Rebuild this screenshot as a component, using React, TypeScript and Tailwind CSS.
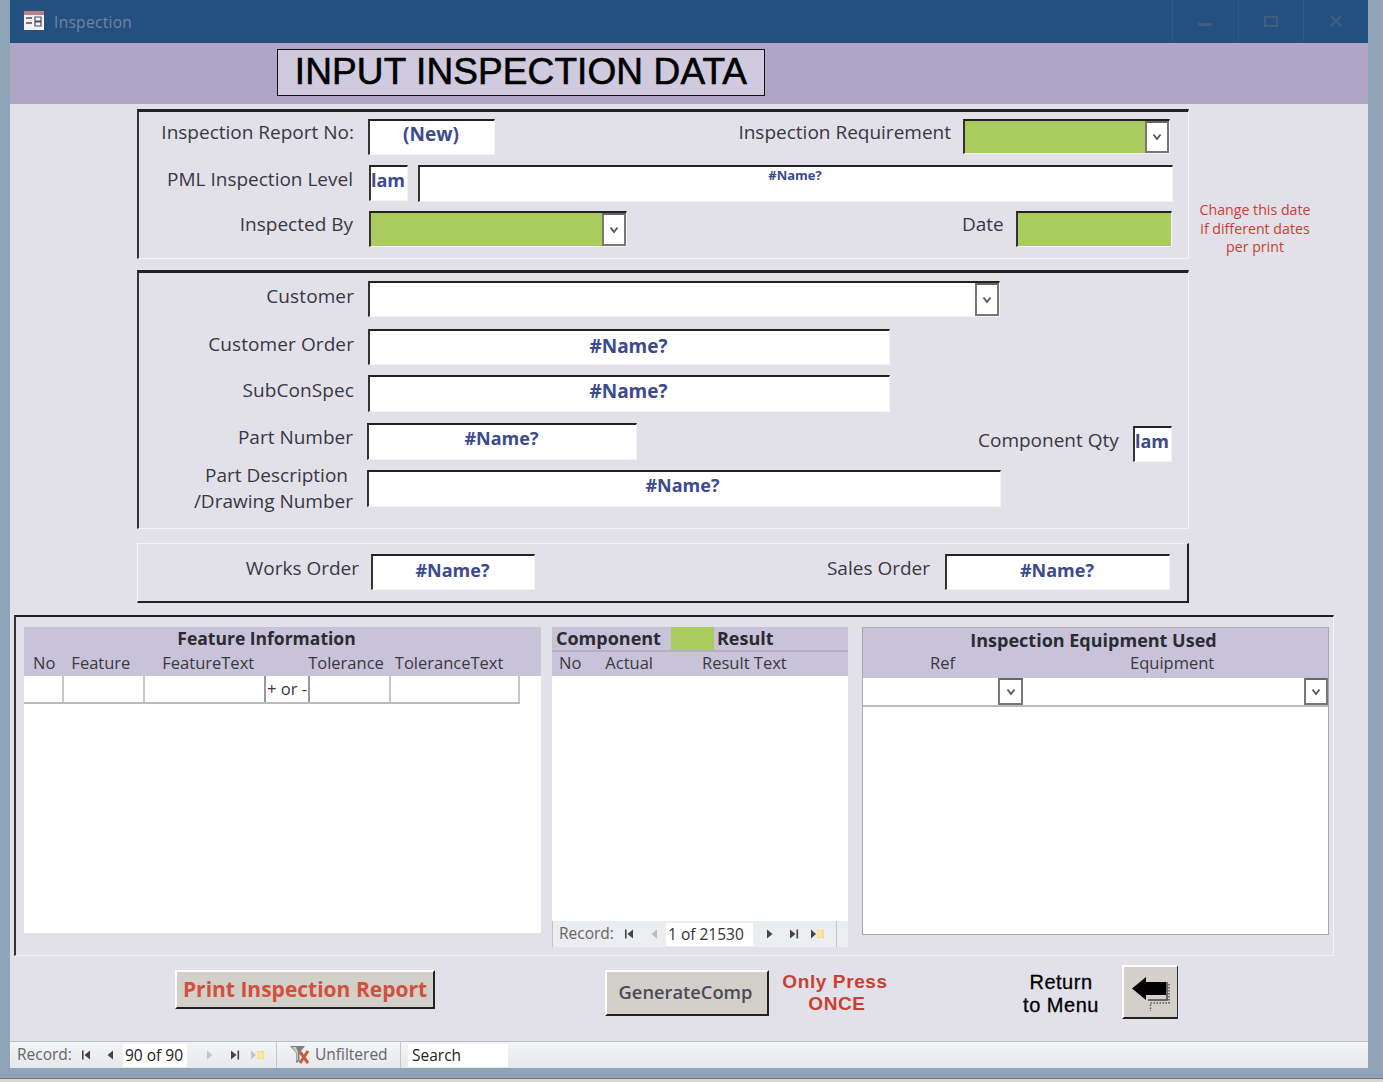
import type { ReactNode } from "react";
import { twMerge } from "tailwind-merge";

const font = "font-['Open_Sans','Noto_Sans',sans-serif]";

function Label({ className = "", children }: { className?: string; children: ReactNode }) {
  return <div className={twMerge("shrink-0 text-[19px] leading-[24px] text-[#38383f]", className)}>{children}</div>;
}

function Field({ className = "", children }: { className?: string; children?: ReactNode }) {
  return (
    <div
      className={twMerge(
        "shrink-0 flex justify-center border-t-2 border-l-2 border-t-[#222] border-l-[#333] border-r border-b border-r-[#f4f4f8] border-b-[#f4f4f8] bg-white text-[19px] font-bold leading-[24px] text-[#3c4a8e]",
        className
      )}
    >
      {children}
    </div>
  );
}

function Chevron() {
  return (
    <svg width="10" height="8" viewBox="0 0 10 8" fill="none">
      <path d="M1.5 1.5 5 6l3.5-4.5" stroke="#555" strokeWidth="1.8" />
    </svg>
  );
}

function DropButton({ className = "" }: { className?: string }) {
  return (
    <div className={`shrink-0 flex items-center justify-center border-2 border-[#777] border-t-[#666] bg-white ${className}`}>
      <Chevron />
    </div>
  );
}

function Combo({ className = "", green = false }: { className?: string; green?: boolean }) {
  return (
    <div
      className={`shrink-0 flex justify-end border-t-2 border-l-2 border-t-[#222] border-l-[#333] border-r border-b border-r-[#f4f4f8] border-b-[#f4f4f8] ${green ? "bg-[#aacc5f]" : "bg-white"} ${className}`}
    >
      <DropButton className="w-[24px]" />
    </div>
  );
}

function NavIcon({ kind, color = "#444" }: { kind: "first" | "prev" | "next" | "last" | "new"; color?: string }) {
  return (
    <svg width="14" height="12" viewBox="0 0 14 12" className="shrink-0 block">
      {kind === "first" && <path d="M3 1.500h1.600v9H3zM11 1.500v9L5.500 6z" fill={color} />}
      {kind === "prev" && <path d="M10 1.500v9L4.500 6z" fill={color} />}
      {kind === "next" && <path d="M4 1.500v9L9.500 6z" fill={color} />}
      {kind === "last" && <path d="M3 1.500v9L8.500 6zM9.500 1.500h1.600v9H9.500z" fill={color} />}
      {kind === "new" && (
        <>
          <path d="M0 1.500v9L5 6z" fill={color} />
          <path d="M6 2h7v8H6z" fill="#eed676" />
          <path d="M6 4h7M6 6h7M6 8h7M8 2v8M10 2v8" stroke="#fff6c8" strokeWidth="0.7" />
        </>
      )}
    </svg>
  );
}

function BackArrow() {
  return (
    <svg width="38" height="38" viewBox="0 0 38 38" className="block">
      <path d="M37 11v19H18.500v8" fill="none" stroke="#555" strokeWidth="1.500" strokeDasharray="1.500 1.500" />
      <path d="M16 27h19V9" fill="none" stroke="#444" strokeWidth="1.500" />
      <path d="M0 15.500 14 4v5h20v13H14v5z" fill="#000" />
    </svg>
  );
}

function TableIcon() {
  return (
    <svg width="22" height="22" viewBox="0 0 22 22">
      <rect x="1" y="1" width="20" height="19" fill="#f2f2f5" />
      <rect x="1" y="1" width="20" height="4" fill="#b9808a" />
      <path d="M3 8h6M3 13h6" stroke="#47505f" strokeWidth="1.600" />
      <path d="M12 7h6v4h-6zM12 12h6v4h-6z" fill="none" stroke="#47505f" strokeWidth="1.200" />
    </svg>
  );
}

function FilterIcon() {
  return (
    <svg width="22" height="20" viewBox="0 0 22 20" className="block">
      <path d="M1 1h15l-5.500 7v8l-3.500 2V8z" fill="#7f7f7f" />
      <path d="M3 2h4l2 5v8l-1.500 1V8z" fill="#c9c9c9" />
      <path d="m11 7 8 11M19 6l-8 12" stroke="#d0583c" strokeWidth="3" />
    </svg>
  );
}

export default function App() {
  return (
    <div className={`${font} flex h-[1082px] w-[1383px] flex-col overflow-hidden bg-[#8fa5b7]`}>
      <div className="ml-[10px] flex h-[1068px] w-[1358px] flex-col">
        {/* Title bar */}
        <div className="flex h-[43px] shrink-0 items-center bg-[#24507f] pb-[1px]">
          <div className="ml-[13px]">
            <TableIcon />
          </div>
          <div className="ml-[9px] mt-[3px] text-[15.500px] tracking-[0.3px] text-[#6f86a2]">Inspection</div>
          <div className="ml-auto flex h-full">
            <div className="flex w-[66px] items-center justify-center border-l border-[#2f5a88] pr-[2px]">
              <div className="mt-[7px] h-[3px] w-[14px] bg-[#3e5e7e]" />
            </div>
            <div className="flex w-[65px] items-center justify-center border-l border-[#2f5a88]">
              <div className="h-[11px] w-[14px] border-2 border-[#3e5e7e]" />
            </div>
            <div className="flex w-[65px] items-center justify-center border-l border-[#2f5a88]">
              <svg width="12" height="12" viewBox="0 0 12 12">
                <path d="m1 1 10 10M11 1 1 11" stroke="#3e5e7e" strokeWidth="2.200" />
              </svg>
            </div>
          </div>
        </div>

        {/* Header band */}
        <div className="flex h-[61px] shrink-0 items-start bg-[#afa6c5] pl-[267px] pt-[6px]">
          <div className="flex h-[47px] w-[488px] items-center justify-center whitespace-nowrap border border-[#111] bg-[#cfcadd] pb-[2px] font-['Liberation_Sans',sans-serif] text-[37px] leading-none tracking-[0.1px] text-black [-webkit-text-stroke:0.6px_black]">
            INPUT INSPECTION DATA
          </div>
        </div>

        {/* Form body */}
        <div className="flex h-[937px] shrink-0 flex-col bg-[#e2e1ea]">
          <div className="ml-[127px] mt-[5px] flex items-start">
            <section className="flex h-[150px] w-[1052px] shrink-0 flex-col border-t-[3px] border-l-2 border-t-[#222] border-l-[#333] border-r border-b border-r-[#f4f4f8] border-b-[#f4f4f8] pt-[7px]">
              <div className="flex h-[46px] items-start">
                <Label className="mt-[1px] w-[215px] text-right">Inspection Report No:</Label>
                <Field className="ml-[14px] h-[36px] w-[127px] pr-[2px] pt-[1px]">(New)</Field>
                <Label className="ml-[243px] mt-[1px] w-[213px] text-right">Inspection Requirement</Label>
                <Combo green className="ml-[12px] h-[35px] w-[207px]" />
              </div>
              <div className="flex h-[46px] items-start">
                <Label className="mt-[2px] w-[214px] text-right">PML Inspection Level</Label>
                <Field className="ml-[16px] h-[36px] w-[39px] justify-start text-[18px]">lam</Field>
                <Field className="ml-[10px] h-[37px] w-[755px] pr-[2px] text-[13px] leading-[16px]">#Name?</Field>
              </div>
              <div className="flex items-start">
                <Label className="mt-[1px] w-[214px] text-right">Inspected By</Label>
                <Combo green className="ml-[16px] h-[36px] w-[258px]" />
                <Label className="ml-[335px] mt-[1px] w-[42px] whitespace-nowrap">Date</Label>
                <Field className="ml-[12px] h-[36px] w-[156px] bg-[#aacc5f]" />
              </div>
            </section>
            <div className="ml-[8px] mt-[92px] w-[116px] whitespace-nowrap text-center text-[14.200px] leading-[18.500px] text-[#c8402f]">
              Change this date
              <br />
              if different dates
              <br />
              per print
            </div>
          </div>

          <section className="ml-[127px] mt-[11px] flex h-[259px] w-[1052px] shrink-0 flex-col border-t-[3px] border-l-2 border-t-[#222] border-l-[#333] border-r border-b border-r-[#f4f4f8] border-b-[#f4f4f8] pt-[8px]">
            <div className="flex h-[48px] items-start">
              <Label className="mt-[3px] w-[215px] text-right tracking-[0.1px]">Customer</Label>
              <Combo className="ml-[14px] h-[36px] w-[632px]" />
            </div>
            <div className="flex h-[46px] items-start">
              <Label className="mt-[3px] w-[215px] text-right tracking-[0.1px]">Customer Order</Label>
              <Field className="ml-[14px] h-[36px] w-[522px] pr-[2px] pt-[3px]">#Name?</Field>
            </div>
            <div className="flex h-[48px] items-start">
              <Label className="mt-[3px] w-[215px] text-right tracking-[0.1px]">SubConSpec</Label>
              <Field className="ml-[14px] h-[37px] w-[522px] pr-[2px] pt-[2px]">#Name?</Field>
            </div>
            <div className="flex h-[47px] items-start">
              <Label className="mt-[2px] w-[214px] text-right">Part Number</Label>
              <Field className="ml-[14px] h-[37px] w-[270px] pr-[2px] text-[18px]">#Name?</Field>
              <Label className="ml-[341px] mt-[5px] w-[139px] whitespace-nowrap text-right">Component Qty</Label>
              <Field className="ml-[16px] mt-[3px] h-[36px] w-[39px] justify-start text-[18px]">lam</Field>
            </div>
            <div className="flex items-start">
              <Label className="mt-[-8px] w-[214px] text-right leading-[26px]">
                <div className="pr-[5px]">Part Description</div>
                <div>/Drawing Number</div>
              </Label>
              <Field className="ml-[14px] h-[37px] w-[634px] pr-[4px] text-[18px]">#Name?</Field>
            </div>
          </section>

          <section className="ml-[127px] mt-[14px] flex h-[60px] w-[1052px] shrink-0 items-start border-t border-l border-b-2 border-r-2 border-t-[#f4f4f8] border-l-[#f4f4f8] border-b-[#222] border-r-[#222] pt-[10px]">
            <Label className="mt-[2px] w-[221px] text-right">Works Order</Label>
            <Field className="ml-[12px] h-[36px] w-[164px] pr-[2px] pt-[1px] text-[18px]">#Name?</Field>
            <Label className="ml-[269px] mt-[2px] w-[126px] text-right">Sales Order</Label>
            <Field className="ml-[15px] h-[36px] w-[225px] pr-[2px] pt-[1px] text-[18px]">#Name?</Field>
          </section>

          {/* Subforms */}
          <section className="ml-[4px] mt-[12px] flex h-[341px] w-[1320px] shrink-0 items-start border-t-2 border-l-2 border-t-[#222] border-l-[#333] border-r border-b border-r-[#f4f4f8] border-b-[#f4f4f8] pl-[8px] pt-[10px]">
            <div className="flex h-[306px] w-[517px] shrink-0 flex-col bg-white">
              <div className="h-[49px] shrink-0 bg-[#c9c3d9]">
                <div className="pr-[32px] text-center text-[17.500px] font-bold leading-[22px] text-[#2b2b33]">
                  Feature Information
                </div>
                <div className="flex whitespace-nowrap pt-[3px] text-[16.500px] leading-[22px] text-[#38383f]">
                  <span className="ml-[9px]">No</span>
                  <span className="ml-[16px]">Feature</span>
                  <span className="ml-[32px]">FeatureText</span>
                  <span className="ml-[54px]">Tolerance</span>
                  <span className="ml-[11px]">ToleranceText</span>
                </div>
              </div>
              <div className="flex h-[28px] w-[496px] shrink-0 border-b-2 border-[#bbb] text-[16.500px] leading-[26px] text-[#38383f]">
                <div className="w-[40px] border-r-2 border-[#c8c8c8]" />
                <div className="w-[81px] border-r-2 border-[#c8c8c8]" />
                <div className="w-[121px] border-r-2 border-[#999]" />
                <div className="w-[44px] whitespace-nowrap border-r-2 border-[#999] pl-[1px]">+ or -</div>
                <div className="w-[81px] border-r-2 border-[#c8c8c8]" />
                <div className="flex-1 border-r-2 border-[#c8c8c8]" />
              </div>
            </div>

            <div className="ml-[11px] flex h-[320px] w-[296px] shrink-0 flex-col">
              <div className="h-[49px] shrink-0 bg-[#c9c3d9]">
                <div className="flex h-[25px] items-start border-b-2 border-[#b5b0c4] text-[18px] font-bold leading-[22px] text-[#2b2b33]">
                  <span className="ml-[4px]">Component</span>
                  <div className="ml-[10px] h-[23px] w-[43px] bg-[#aacc5f]" />
                  <span className="ml-[3px]">Result</span>
                </div>
                <div className="flex whitespace-nowrap pt-[1px] text-[16.500px] leading-[20px] text-[#38383f]">
                  <span className="ml-[7px]">No</span>
                  <span className="ml-[24px]">Actual</span>
                  <span className="ml-[49px]">Result Text</span>
                </div>
              </div>
              <div className="h-[245px] shrink-0 bg-white" />
              <div className="flex h-[26px] shrink-0 items-center border-l border-[#c4c4c4] bg-[#ecedf1] pl-[6px] text-[15.500px] text-[#666]">
                <span className="w-[56px]">Record:</span>
                <span className="ml-[7px]"><NavIcon kind="first" /></span>
                <span className="ml-[11px]"><NavIcon kind="prev" color="#bbb" /></span>
                <div className="ml-[5px] h-[23px] w-[87px] bg-white pl-[2px] leading-[23px] text-[#333]">1 of 21530</div>
                <span className="ml-[10px]"><NavIcon kind="next" /></span>
                <span className="ml-[10px]"><NavIcon kind="last" /></span>
                <span className="ml-[10px]"><NavIcon kind="new" /></span>
                <div className="ml-[11px] h-full border-l border-[#c4c4c4]" />
              </div>
            </div>

            <div className="ml-[14px] flex h-[308px] w-[467px] shrink-0 flex-col border border-[#aaa] bg-white">
              <div className="h-[50px] shrink-0 bg-[#c9c3d9]">
                <div className="pr-[4px] text-center text-[18px] font-bold leading-[24px] text-[#2b2b33]">
                  Inspection Equipment Used
                </div>
                <div className="flex text-[16.500px] leading-[22px] text-[#38383f]">
                  <span className="ml-[67px]">Ref</span>
                  <span className="ml-[175px]">Equipment</span>
                </div>
              </div>
              <div className="flex h-[29px] shrink-0 border-b-2 border-[#bbb]">
                <div className="w-[135px]" />
                <DropButton className="w-[25px]" />
                <div className="w-[281px]" />
                <DropButton className="w-[24px]" />
              </div>
            </div>
          </section>

          {/* Buttons */}
          <div className="flex h-[86px] items-start">
            <button className="ml-[165px] mt-[14px] h-[39px] w-[260px] whitespace-nowrap border-t-2 border-l-2 border-t-white border-l-white border-r-2 border-b-2 border-r-[#222] border-b-[#222] bg-[#d3d0ca] text-[21px] font-bold text-[#d2503c]">
              Print Inspection Report
            </button>
            <button className="ml-[170px] mt-[14px] h-[46px] w-[164px] border-t-2 border-l-2 border-t-white border-l-white border-r-2 border-b-2 border-r-[#222] border-b-[#222] bg-[#d3d0ca] pb-[2px] pr-[3px] text-[18.300px] font-semibold text-[#4a4a58]">
              GenerateComp
            </button>
            <div className="ml-[12px] mt-[15px] w-[108px] whitespace-nowrap text-center font-['Liberation_Sans',sans-serif] text-[19px] font-bold leading-[22px] tracking-[0.6px] text-[#c8402f]">
              <div>Only Press</div>
              <div className="pl-[4px]">ONCE</div>
            </div>
            <div className="ml-[133px] mt-[15px] w-[78px] whitespace-nowrap text-center font-['Liberation_Sans',sans-serif] text-[20px] leading-[23px] tracking-[0.5px] text-black [-webkit-text-stroke:0.3px_black]">
              <div>Return</div>
              <div>to Menu</div>
            </div>
            <button className="ml-[22px] mt-[9px] flex h-[54px] w-[56px] items-center justify-center border-t-2 border-l-2 border-t-white border-l-white border-r border-b-2 border-r-[#333] border-b-[#222] bg-[#d3d0ca]">
              <BackArrow />
            </button>
          </div>
        </div>

        {/* Record navigator */}
        <div className="flex h-[27px] shrink-0 items-center border-t border-[#bdbdc5] bg-linear-to-b from-[#f3f4f6] to-[#e6e8ec] pl-[7px] text-[15.500px] text-[#666]">
          <span className="w-[55px]">Record:</span>
          <span className="ml-[7px]"><NavIcon kind="first" /></span>
          <span className="ml-[10px]"><NavIcon kind="prev" /></span>
          <div className="ml-[6px] h-[23px] w-[64px] bg-white pl-[2px] leading-[23px] text-[#222]">90 of 90</div>
          <span className="ml-[16px]"><NavIcon kind="next" color="#c4c4c4" /></span>
          <span className="ml-[11px]"><NavIcon kind="last" /></span>
          <span className="ml-[9px]"><NavIcon kind="new" color="#c4c4c4" /></span>
          <div className="ml-[11px] h-full border-l border-[#c4c4c4]" />
          <span className="ml-[12px]"><FilterIcon /></span>
          <span className="ml-[4px] w-[74px] whitespace-nowrap">Unfiltered</span>
          <div className="ml-[11px] h-full border-l border-[#c4c4c4]" />
          <div className="ml-[7px] h-[23px] w-[100px] bg-white pl-[4px] leading-[23px] text-[#222]">Search</div>
        </div>
      </div>
      <div className="h-[10px] shrink-0" />
      <div className="h-[4px] shrink-0 border-t border-[#777] bg-[#d9d6cc]" />
    </div>
  );
}
